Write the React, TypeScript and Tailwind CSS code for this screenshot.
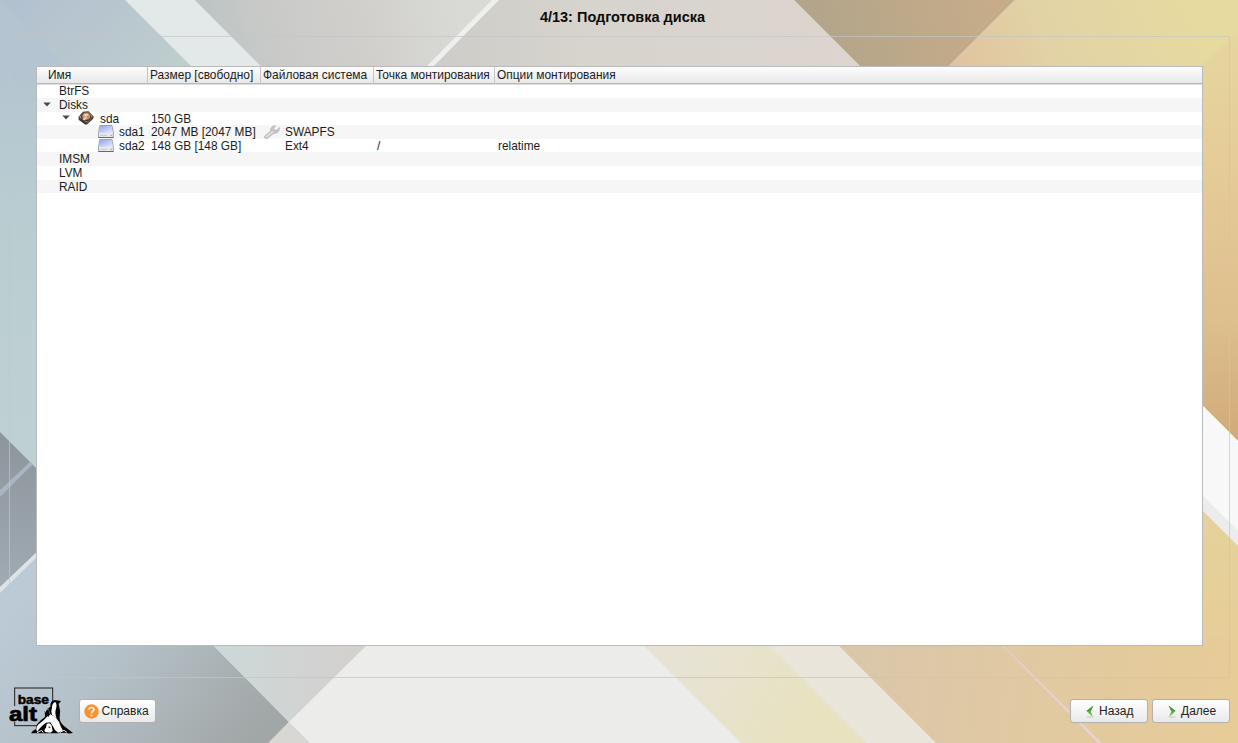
import type { ReactNode } from "react";

function Wallpaper() {
  return (
    <svg className="absolute inset-0" width="1238" height="743" viewBox="0 0 1238 743" aria-hidden="true">
      <defs>
        <linearGradient id="tl" gradientUnits="userSpaceOnUse" x1="0" y1="20" x2="150" y2="170">
          <stop offset="0" stopColor="#b2c1cf" />
          <stop offset="1" stopColor="#c2d1cd" />
        </linearGradient>
        <linearGradient id="left" gradientUnits="userSpaceOnUse" x1="0" y1="60" x2="0" y2="460">
          <stop offset="0" stopColor="#b4c4d0" />
          <stop offset="0.4" stopColor="#b9cdd1" />
          <stop offset="1" stopColor="#bfd0d1" />
        </linearGradient>
        <linearGradient id="top" gradientUnits="userSpaceOnUse" x1="210" y1="50" x2="460" y2="0">
          <stop offset="0" stopColor="#bcc5c4" />
          <stop offset="0.25" stopColor="#c9cac8" />
          <stop offset="0.6" stopColor="#d1cfcc" />
          <stop offset="1" stopColor="#d9dad6" />
        </linearGradient>
        <linearGradient id="topMid" gradientUnits="userSpaceOnUse" x1="450" y1="0" x2="850" y2="0">
          <stop offset="0" stopColor="#cfcdc9" />
          <stop offset="0.35" stopColor="#d7d4cd" />
          <stop offset="1" stopColor="#ddd5cf" />
        </linearGradient>
        <linearGradient id="tan" gradientUnits="userSpaceOnUse" x1="820" y1="40" x2="990" y2="0">
          <stop offset="0" stopColor="#b3a58a" />
          <stop offset="1" stopColor="#c6ac89" />
        </linearGradient>
        <linearGradient id="tr" gradientUnits="userSpaceOnUse" x1="960" y1="70" x2="1180" y2="-20">
          <stop offset="0" stopColor="#e0c4a0" />
          <stop offset="0.4" stopColor="#e2d3a6" />
          <stop offset="1" stopColor="#e6da9f" />
        </linearGradient>
        <linearGradient id="right" gradientUnits="userSpaceOnUse" x1="0" y1="30" x2="0" y2="440">
          <stop offset="0" stopColor="#e6d6a0" />
          <stop offset="0.35" stopColor="#e5cb98" />
          <stop offset="0.7" stopColor="#debf8e" />
          <stop offset="1" stopColor="#d0ab79" />
        </linearGradient>
        <linearGradient id="rightLow" gradientUnits="userSpaceOnUse" x1="0" y1="530" x2="0" y2="640">
          <stop offset="0" stopColor="#e5d19b" />
          <stop offset="1" stopColor="#e7cd98" />
        </linearGradient>
        <linearGradient id="slate" gradientUnits="userSpaceOnUse" x1="0" y1="440" x2="0" y2="590">
          <stop offset="0" stopColor="#8e959d" />
          <stop offset="1" stopColor="#a0abb2" />
        </linearGradient>
        <linearGradient id="bl" gradientUnits="userSpaceOnUse" x1="20" y1="600" x2="230" y2="770">
          <stop offset="0" stopColor="#bccad6" />
          <stop offset="0.4" stopColor="#b5c1c8" />
          <stop offset="1" stopColor="#a1a6a6" />
        </linearGradient>
        <linearGradient id="mist" gradientUnits="userSpaceOnUse" x1="230" y1="0" x2="350" y2="0">
          <stop offset="0" stopColor="#cdd7d8" />
          <stop offset="1" stopColor="#d3d1ce" />
        </linearGradient>
        <linearGradient id="cream" gradientUnits="userSpaceOnUse" x1="670" y1="646" x2="800" y2="720">
          <stop offset="0" stopColor="#e6e3d6" />
          <stop offset="1" stopColor="#e8e2c1" />
        </linearGradient>
        <linearGradient id="br" gradientUnits="userSpaceOnUse" x1="860" y1="646" x2="1238" y2="700">
          <stop offset="0" stopColor="#dac7aa" />
          <stop offset="0.5" stopColor="#e1c9a1" />
          <stop offset="1" stopColor="#e7cc97" />
        </linearGradient>
        <linearGradient id="thin" gradientUnits="userSpaceOnUse" x1="1003" y1="646" x2="1100" y2="743">
          <stop offset="0" stopColor="#e2cfb8" />
          <stop offset="1" stopColor="#e9d5dc" />
        </linearGradient>
      </defs>
      <rect width="1238" height="743" fill="#ececea" />
      <path d="M0 0H260V70L60 600H0Z" fill="url(#left)" />
      <path d="M0 0H125L260 135H135Z" fill="url(#tl)" />
      <path d="M125 0H195L265 70H195Z" fill="#e3e8e8" />
      <path d="M195 0H496L426 70H265Z" fill="url(#top)" />
      <path d="M496 0H794L864 70H426Z" fill="url(#topMid)" />
      <path d="M492 0H499L430 70H423Z" fill="#efefed" />
      <path d="M794 0H1015L945 70H864Z" fill="url(#tan)" />
      <path d="M1015 0H1238V70H945Z" fill="url(#tr)" />
      <path d="M1238 30V441L1195 398V73Z" fill="url(#right)" />
      <path d="M1195 398L1238 441V531L1195 488Z" fill="#f8f8f8" />
      <path d="M1195 488L1238 531V546L1195 503Z" fill="#ececec" />
      <path d="M1195 503L1238 546V743H1195Z" fill="url(#rightLow)" />
      <path d="M0 432L40 472V550L0 588Z" fill="url(#slate)" />
      <path d="M0 490L30 462L33 464L0 497Z" fill="#a9b6c1" />
      <path d="M0 587V743H269L289 722L206 638H40V549Z" fill="url(#bl)" />
      <path d="M0 587L40 549V554L0 593Z" fill="#dfe3e6" />
      <path d="M206 638H374L289 722Z" fill="url(#mist)" />
      <path d="M289 722L310 743H268Z" fill="#d9d7d4" />
      <path d="M636 638H762L867 743H741Z" fill="url(#cream)" />
      <path d="M762 638H831L936 743H867Z" fill="#e9e5da" />
      <path d="M831 638H1238V743H936Z" fill="url(#br)" />
      <path d="M1003 646L1100 743" stroke="url(#thin)" strokeWidth="2" />
    </svg>
  );
}

function Arrow() {
  return (
    <svg className="mb-px shrink-0" width="8" height="5" viewBox="0 0 8 5">
      <path d="M0.3 0.5H7.7L4 4.6Z" fill="#4a4a4a" />
    </svg>
  );
}

function DiskIcon() {
  return (
    <svg className="mr-px shrink-0" width="16" height="14" viewBox="0 0 16 14">
      <path d="M0.5 6L5 0.7L10.5 0.3L15.4 5.2V7.5L9 13.6H7L0.6 8.8Z" fill="#3d3835" />
      <path d="M1.2 6.3L6 1.2L10.2 0.9L14.6 5.3L8.2 11.4Z" fill="#a29a92" />
      <ellipse cx="8" cy="5.8" rx="5" ry="4.5" fill="#4c3526" />
      <ellipse cx="8.2" cy="5.3" rx="3.9" ry="3.5" fill="#cf935f" />
      <path d="M5 4.6Q7.5 1.8 10.7 3.4L8.4 5.2Z" fill="#f6d3aa" />
      <path d="M4.4 8.3L8.2 5.3L9 6.2L6.5 9.6Z" fill="#dcd7d0" />
      <path d="M9 11.8L14 7.3" stroke="#77706b" strokeWidth="0.8" />
    </svg>
  );
}

function PartitionIcon() {
  return (
    <svg className="shrink-0" width="16" height="13" viewBox="0 0 16 13">
      <defs>
        <linearGradient id="plate" x1="0" y1="0" x2="1" y2="1">
          <stop offset="0" stopColor="#93a6ec" />
          <stop offset="1" stopColor="#e5ebff" />
        </linearGradient>
      </defs>
      <path d="M1.8 0.5H14L15.4 8V12.5H0.5V8Z" fill="#e9e9ec" stroke="#8d8d95" strokeWidth="0.8" />
      <path d="M2.3 1H13.5L14.6 7.8H1.3Z" fill="url(#plate)" />
      <path d="M0.5 12.5H15.4" stroke="#66666c" />
      <path d="M2 10.3H9" stroke="#c5c5ca" />
      <path d="M12 10.3H14" stroke="#a9b5a9" />
    </svg>
  );
}

function WrenchIcon() {
  return (
    <svg className="shrink-0" width="16" height="14" viewBox="0 0 16 14">
      <path
        d="M0.8 10.9L6.6 6C6 3.2 8 0.8 11.6 0.7L9.6 3.2L10.5 5.1L12.6 5.3L15.2 2.6C16 6.4 12.8 8.9 9.9 8.2L3.6 13.2C1.6 14 -0.3 12.6 0.8 10.9Z"
        fill="#c6c6c6"
        stroke="#a8a8a8"
        strokeWidth="0.6"
      />
      <path d="M2 12L9 6.5" stroke="#e8e8e8" strokeWidth="1.2" />
    </svg>
  );
}

type Row = {
  name: string;
  indent: string;
  arrow?: boolean;
  icon?: ReactNode;
  size?: string;
  fs?: string;
  fsIcon?: ReactNode;
  mount?: string;
  options?: string;
};

const rows: Row[] = [
  { name: "BtrFS", indent: "pl-[22px]" },
  { name: "Disks", indent: "pl-[6px]", arrow: true },
  { name: "sda", indent: "pl-[25px]", arrow: true, icon: <DiskIcon />, size: "150 GB" },
  {
    name: "sda1",
    indent: "pl-[61px]",
    icon: <PartitionIcon />,
    size: "2047 MB [2047 MB]",
    fs: "SWAPFS",
    fsIcon: <WrenchIcon />,
  },
  {
    name: "sda2",
    indent: "pl-[61px]",
    icon: <PartitionIcon />,
    size: "148 GB [148 GB]",
    fs: "Ext4",
    mount: "/",
    options: "relatime",
  },
  { name: "IMSM", indent: "pl-[22px]" },
  { name: "LVM", indent: "pl-[22px]" },
  { name: "RAID", indent: "pl-[22px]" },
];

const columns = "grid grid-cols-[111px_113px_113px_121px_1fr]";

function DiskTable() {
  const head = "border-r border-[#c6c6c6] pl-[2px]";
  return (
    <div className="h-[580px] w-[1167px] border border-[#b9babb] bg-white text-[11.85px] whitespace-nowrap text-[#1c1c1c]">
      <div
        className={`${columns} relative h-[17px] border-b border-[#b8b8b8] bg-linear-to-b from-[#fdfdfd] to-[#e8e8e8] text-[11.95px] leading-[17px] shadow-[0_1px_0_#dedede]`}
      >
        <div className="border-r border-[#c6c6c6] pl-[11px]">Имя</div>
        <div className={head}>Размер [свободно]</div>
        <div className={head}>Файловая система</div>
        <div className={head}>Точка монтирования</div>
        <div className="pl-[2px]">Опции монтирования</div>
      </div>
      <div className="pt-[0.4px]">
        {rows.map((row, i) => (
          <div
            key={row.name}
            className={`${columns} h-[13.6px] grid-rows-[13.6px] leading-[14.8px] ${i % 2 ? "bg-[#f6f6f6]" : "bg-white"}`}
          >
            <div className={`flex items-start ${row.indent}`}>
              {row.arrow && (
                <span className="mr-2 flex h-[13.6px] items-center">
                  <Arrow />
                </span>
              )}
              {row.icon && <span className="mr-[5px] flex h-[13.6px] items-center">{row.icon}</span>}
              {row.name}
            </div>
            <div className="pl-[3px]">{row.size}</div>
            <div className="flex items-start pl-[3px]">
              <span className="mr-[5px] flex h-[13.6px] w-4 items-center">{row.fsIcon}</span>
              {row.fs}
            </div>
            <div className="pl-[3px]">{row.mount}</div>
            <div className="pl-[3px]">{row.options}</div>
          </div>
        ))}
      </div>
    </div>
  );
}

function Logo() {
  return (
    <svg className="shrink-0" width="79" height="63" viewBox="0 0 237 189">
      <rect x="44" y="24" width="114" height="113" fill="none" stroke="#1c2022" strokeWidth="3" />
      <rect x="36" y="78" width="14" height="47" fill="#b9c6d0" />
      <g fontFamily="'Liberation Sans', Arial, sans-serif" fontWeight="700" fill="#000" stroke="#000">
        <text x="53" y="73" fontSize="37" strokeWidth="1.4" textLength="94" lengthAdjust="spacingAndGlyphs">
          base
        </text>
        <text x="27" y="123" fontSize="60" strokeWidth="2" textLength="84" lengthAdjust="spacingAndGlyphs">
          alt
        </text>
      </g>
      <path
        d="M151 80Q150 62 164 60L183 63L176 72Q183 92 179 112Q178 126 192 138L219 159Q207 162 196 158L172 160H93Q99 150 107 148L111 133Q123 118 135 111L134 91L145 85Z"
        fill="#050505"
      />
      <path d="M156 84Q155 70 166 66Q172 73 168 86Q163 100 170 114L156 105Q151 94 156 84Z" fill="#fff" />
      <path
        d="M133 90L145 86L151 103L166 111Q180 126 183 141L189 152L174 158Q163 151 160 141L151 127L139 128Q125 135 112 155Q105 146 114 134Q132 122 143 108Z"
        fill="#f8f8f8"
      />
      <path d="M137 92L145 87L150 103L145 111L138 104Z" fill="#050505" />
      <path d="M140 132Q149 126 155 137L158 153L151 158L136 156Q130 151 138 143Z" fill="#fff" />
      <path d="M146 139L152 142L146 145Z" fill="#111" />
      <path d="M111 158L125 151L130 158M179 158L192 151L201 157" fill="none" stroke="#e9e9e9" strokeWidth="3" />
    </svg>
  );
}

function NavArrow({ back }: { back?: boolean }) {
  return (
    <svg className={back ? "shrink-0" : "shrink-0 -scale-x-100"} width="8" height="13" viewBox="0 0 8 13">
      <ellipse cx="4" cy="12" rx="3.8" ry="0.7" fill="#cfcfcf" />
      <path d="M7.5 0.6L0.4 6L6.8 11.7L4.6 6.2Z" fill="#62b636" />
      <path d="M7.5 0.6L0.4 6L4.6 6.2Z" fill="#4b963f" />
    </svg>
  );
}

const button =
  "flex items-center rounded-[3px] border border-[#b1b1af] bg-linear-to-b from-[#ffffff] to-[#e9e9e9] text-[12px] leading-none text-[#222]";

export default function App() {
  return (
    <div className="relative h-[743px] w-[1238px] overflow-hidden font-['Liberation_Sans',Arial,sans-serif]">
      <Wallpaper />
      <div className="relative flex h-full flex-col">
        <h1 className="h-9 pl-[7px] text-center text-[14.5px] leading-[34px] font-bold text-[#0c0c0c]">
          4/13: Подготовка диска
        </h1>
        <main className="mr-2 ml-[9px] h-[642px] rounded-[2px] border border-[#c4c4c4]/70 pt-[29px] pl-[26px]">
          <DiskTable />
        </main>
        <footer className="flex h-[65px] items-start pt-[2px] pr-2">
          <Logo />
          <button className={`${button} mt-[19px] h-6 w-[77px] pl-1`}>
            <svg className="mr-[2.5px] shrink-0" width="15" height="15" viewBox="0 0 15 15">
              <circle cx="7.5" cy="7.5" r="7.2" fill="#fb922f" />
              <path
                d="M5 5.7C5 2.8 10 2.8 10 5.5C10 7.3 7.5 7.2 7.5 9.2"
                fill="none"
                stroke="#fff3e4"
                strokeWidth="1.6"
              />
              <circle cx="7.5" cy="11.4" r="1" fill="#fff3e4" />
            </svg>
            Справка
          </button>
          <button className={`${button} mt-[19px] ml-auto h-6 w-[78px] pl-[15px]`}>
            <NavArrow back />
            <span className="ml-[5px]">Назад</span>
          </button>
          <button className={`${button} mt-[19px] ml-1 h-6 w-[78px] pl-[15px]`}>
            <NavArrow />
            <span className="ml-[5px]">Далее</span>
          </button>
        </footer>
      </div>
    </div>
  );
}
